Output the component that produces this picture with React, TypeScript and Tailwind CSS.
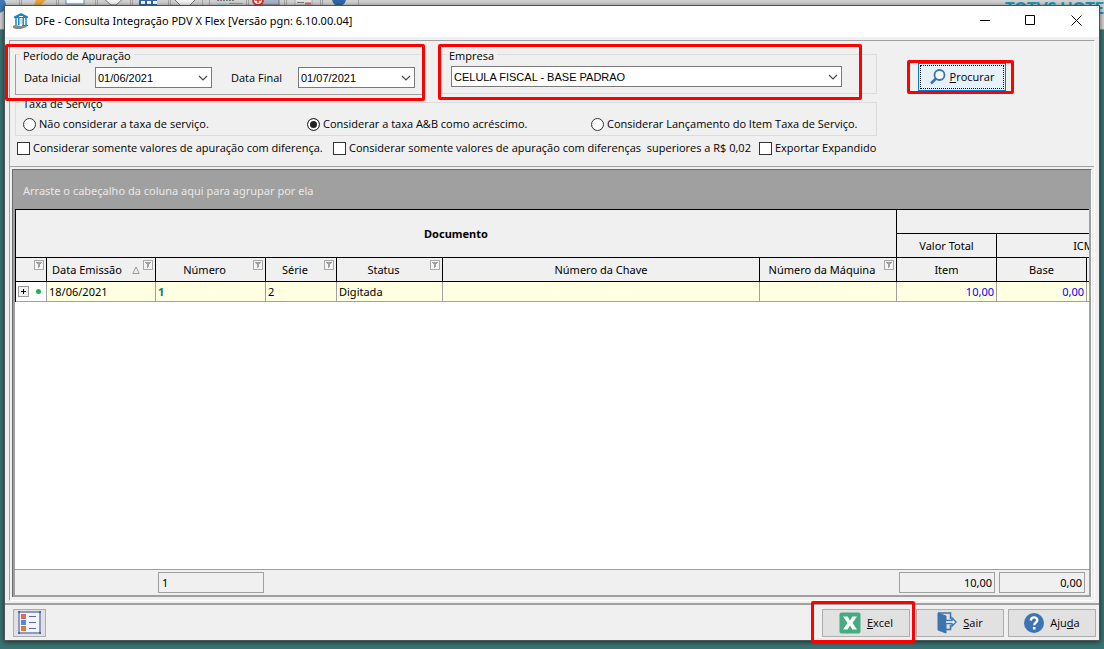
import React from "react";

const label = "text-[11px] leading-4 font-['Open_Sans','Noto_Sans',sans-serif] text-black";
const th = "border-r border-b border-black font-normal p-0 relative";
const td = "border-r border-b border-[#a0a0a0] bg-[#ffffe1] px-0.5 py-0 h-5 whitespace-nowrap";

function Marker({ className }: { className: string }) {
  return <span aria-hidden="true" className={`pointer-events-none absolute z-10 rounded-xs border-3 border-[#ff0000] ${className}`} />;
}

function Chevron() {
  return (
    <svg aria-hidden="true" className="pointer-events-none absolute right-1 top-1/2 -mt-1 h-2 w-2.5" viewBox="0 0 10 8" fill="none" stroke="#444" strokeWidth="1.1">
      <path d="M1 2l4 4 4-4" />
    </svg>
  );
}

function Combo({ id, value, className }: { id: string; value: string; className: string }) {
  return (
    <span className={`relative block ${className}`}>
      <select id={id} className="block h-[21px] w-full appearance-none rounded-none border border-[#7a7a7a] bg-white pl-0.5 pr-4 font-['Liberation_Sans',sans-serif] text-[11px] leading-4 text-black">
        <option>{value}</option>
      </select>
      <Chevron />
    </span>
  );
}

function Group({ title, className, frame, marker, children }: { title: React.ReactNode; className: string; frame: string; marker?: string; children: React.ReactNode }) {
  return (
    <div className={`relative ${className}`}>
      <span aria-hidden="true" className={`absolute inset-x-0 top-1.5 bottom-0 border ${frame}`} />
      <fieldset className="relative">
        <legend className={`ml-[5px] bg-[#f0f0f0] px-[3px] ${label}`}>{title}</legend>
        {children}
      </fieldset>
      {marker && <Marker className={marker} />}
    </div>
  );
}

function FilterIcon() {
  return (
    <svg aria-hidden="true" className="absolute right-0.5 top-0.5 h-2.5 w-2.5" viewBox="0 0 10 10" fill="none" stroke="#a8a8a8">
      <rect x=".5" y=".5" width="9" height="9" fill="#f4f4f4" />
      <path d="M2 2.500h6M3 3.500h4M4.500 4v4M5.500 4v3" stroke="#a0a0a0" />
    </svg>
  );
}

function Radio({ text, checked }: { text: string; checked?: boolean }) {
  return (
    <label className={`flex flex-none items-center gap-[3px] whitespace-nowrap ${label}`}>
      <input type="radio" name="taxa" defaultChecked={checked} className="size-[13px] appearance-none rounded-full border border-[#333] bg-white checked:bg-[#222] checked:shadow-[inset_0_0_0_2px_#fff]" />
      {text}
    </label>
  );
}

function Check({ text }: { text: string }) {
  return (
    <label className={`flex flex-none items-center gap-[3px] whitespace-pre ${label}`}>
      <input type="checkbox" className="size-[13px] appearance-none border border-[#333] bg-white checked:bg-[#333]" />
      {text}
    </label>
  );
}

function BackdropBar() {
  return (
    <div aria-hidden="true" className="absolute inset-x-0 top-0 flex h-[30px] justify-between border-b border-[#888] bg-[#d2d2d2]">
      <svg width="360" height="29" viewBox="0 0 360 29" fill="none">
        <path d="M19.500 0v6M21.500 0v6M56.500 0v6M58.500 0v6M95.500 0v6M97.500 0v6M130.500 0v6M132.500 0v6M168.500 0v6M170.500 0v6M202.500 0v6M209.500 0v6M246.500 0v6M248.500 0v6M284.500 0v6M286.500 0v6M320.500 0v6M322.500 0v6M358.500 0v6" stroke="#a4a4a4" />
        <circle cx="-2" cy="5" r="8" fill="#3f78b5" />
        <path d="M36 0h10l-5 5h-7z" fill="#e8a33c" />
        <rect x="66" y="-6" width="18" height="10" fill="#fff" stroke="#5f8fc4" />
        <path d="M103 -2h21l-8 7h-5z" fill="#f4f4f4" stroke="#777" />
        <rect x="139" y="-2" width="18" height="8" fill="#3568a6" />
        <path d="M141 2.500h4m2 0h4m2 0h4" stroke="#fff" strokeWidth="3" />
        <path d="M173 -2h24l-8 8h-8z" fill="#f4f4f4" stroke="#777" />
        <path d="M217 .5h18" stroke="#777" strokeDasharray="2 1" />
        <path d="M217 4h10" stroke="#a5d5e0" strokeWidth="2" />
        <path d="M229 3.500h14" stroke="#999" />
        <rect x="262" y="-2" width="17" height="7" fill="#a9b6cd" stroke="#777" />
        <circle cx="258" cy="0" r="5" fill="#fff" stroke="#cf3528" strokeWidth="2" />
        <path d="M258 -3v6M255 0h6" stroke="#cf3528" strokeWidth="1.500" />
        <path d="M295 -2h17v7h-17z" fill="#e4e4e4" stroke="#aaa" />
        <path d="M297 2.500h7" stroke="#777" /><path d="M305 3.500h6" stroke="#d66" strokeWidth="2" />
        <circle cx="339" cy="-1" r="7" fill="#2f67a8" />
      </svg>
      <span className="whitespace-nowrap font-['Lato',sans-serif] text-[16px] leading-4 font-black text-[#1d9bb8]">TOTVS HOTE</span>
    </div>
  );
}

function BottomButton({ icon, children }: { icon: React.ReactNode; children: React.ReactNode }) {
  return (
    <button type="button" className={`flex h-7 w-[88px] items-center justify-center gap-1.5 border border-[#adadad] bg-[#e1e1e1] ${label}`}>
      {icon}
      <span>{children}</span>
    </button>
  );
}

export default function App() {
  return (
    <div className="relative flex min-h-screen flex-col overflow-hidden bg-[#3b7272] pt-[5px] pr-1 pb-2 pl-1">
      <BackdropBar />
      <main className="relative flex min-w-0 flex-1 flex-col border border-[#4a5555] bg-[#f0f0f0] shadow-[0_1px_5px_rgba(0,0,0,.6)]">
        <header className="flex h-[31px] items-center justify-between bg-white pb-0.5 pl-2">
          <div className="flex items-center gap-1.5">
            <svg aria-hidden="true" className="h-4 w-4" viewBox="0 0 16 16">
              <path d="M8 0l7 3.500v1.500H1V3.500z" fill="#1c86c2" />
              <path d="M6 3.500h4" stroke="#fff" />
              <path d="M3 5v7M5.800 5v7M10.200 5v7M13 5v7" stroke="#1c86c2" strokeWidth="1.500" />
              <path d="M8 6v5" stroke="#7cc8ea" />
              <path d="M0 13c3-2 5 0 8 0h5c1 0 1 1 0 1.200L8 16H3l-3-1z" fill="#888" />
              <path d="M9 12.500h6" stroke="#1c86c2" />
            </svg>
            <h1 className="font-['Noto_Sans',sans-serif] text-[11px] leading-4">DFe - Consulta Integração PDV X Flex [Versão pgn: 6.10.00.04]</h1>
          </div>
          <div className="flex">
            <button type="button" aria-label="Minimizar" className="flex h-[29px] w-[46px] items-center justify-center">
              <svg className="h-[11px] w-[11px]" viewBox="0 0 11 11"><path d="M0 5.500h10" stroke="#000" /></svg>
            </button>
            <button type="button" aria-label="Maximizar" className="flex h-[29px] w-[45px] items-center justify-center">
              <svg className="h-[11px] w-[11px]" viewBox="0 0 11 11" fill="none"><path d="M.5.5h9v9h-9z" stroke="#000" /></svg>
            </button>
            <button type="button" aria-label="Fechar" className="flex h-[29px] w-[46px] items-center justify-center">
              <svg className="h-[11px] w-[11px]" viewBox="0 0 11 11"><path d="M.5.5l10 10M10.500.5l-10 10" stroke="#000" /></svg>
            </button>
          </div>
        </header>

        <div className="mx-1 mt-[3px] mb-0.5 flex flex-1 flex-col border border-t-[#a0a0a0] border-l-[#a0a0a0] border-r-white border-b-white">
          <section className="flex gap-[41px] border-b border-[#a0a0a0] pt-[7px] pb-2.5 pl-[5px]">
            <div className="w-[862px] flex-none">
              <div className="flex">
                <Group
                  title="Período de Apuração"
                  className="h-[47px] w-[408px] flex-none"
                  frame="border-[#a0a0a0] border-t-[#dcdcdc]"
                  marker="-left-2.5 -right-0.5 -top-1 -bottom-1.5"
                >
                  <div className="flex items-center pl-[9px] pt-[3px]">
                    <label htmlFor="ini" className={`w-[71px] ${label}`}>Data Inicial</label>
                    <Combo id="ini" value="01/06/2021" className="w-[117px]" />
                    <label htmlFor="fim" className={`ml-[19px] w-[67px] ${label}`}>Data Final</label>
                    <Combo id="fim" value="01/07/2021" className="w-[117px]" />
                  </div>
                </Group>
                <Group
                  title={<label htmlFor="emp">Empresa</label>}
                  className="ml-[18px] h-[46px] flex-1"
                  frame="border-[#dcdcdc]"
                  marker="-left-[3px] right-[15px] -top-1 -bottom-1.5"
                >
                  <div className="pl-2.5 pt-0.5">
                    <Combo id="emp" value="CELULA FISCAL - BASE PADRAO" className="w-[391px]" />
                  </div>
                </Group>
              </div>
              <Group title="Taxa de Serviço" className="mt-px h-10" frame="border-[#dcdcdc]">
                <div className="mt-1 grid grid-cols-[284px_284px_1fr] pl-2">
                  <Radio text="Não considerar a taxa de serviço." />
                  <Radio text="Considerar a taxa A&B como acréscimo." checked />
                  <Radio text="Considerar Lançamento do Item Taxa de Serviço." />
                </div>
              </Group>
              <div className="mt-1 grid grid-cols-[316px_426px_1fr] pl-0.5">
                <Check text="Considerar somente valores de apuração com diferença." />
                <Check text="Considerar somente valores de apuração com diferenças  superiores a R$ 0,02" />
                <Check text="Exportar Expandido" />
              </div>
            </div>
            <div className="relative mt-[15px] h-7 w-[88px] flex-none">
              <button type="button" className={`flex h-full w-full items-center justify-center gap-1 border border-[#0078d7] bg-[#e5f1fb] outline-1 -outline-offset-3 outline-dotted outline-black ${label}`}>
                <svg aria-hidden="true" className="h-4 w-4" viewBox="0 0 16 16" fill="none" stroke="#3c74ad">
                  <circle cx="9.500" cy="6" r="5" strokeWidth="1.800" fill="#f4faff" />
                  <path d="M6 9.500l-5 5" strokeWidth="2.600" />
                </svg>
                <span><u>P</u>rocurar</span>
              </button>
              <Marker className="-left-[11px] -right-2 -top-[3px] -bottom-[3px]" />
            </div>
          </section>

          <section className="mx-0.5 mt-0.5 mb-[3px] flex min-h-0 flex-1 flex-col border-t border-l border-[#696969] border-r border-r-white">
            <div className="flex flex-1 flex-col border-2 border-[#a0a0a0] bg-white">
              <p className="flex h-[37px] items-center bg-[#a0a0a0] pl-2 font-['Noto_Sans',sans-serif] text-[11px] leading-4 text-[#e8e8e8]">Arraste o cabeçalho da coluna aqui para agrupar por ela</p>
              <div className="overflow-hidden">
                <table className="w-[calc(100%+88px)] table-fixed border-separate border-spacing-0 border-t border-l border-black font-['Noto_Sans',sans-serif] text-[11px] leading-4">
                  <colgroup>
                    <col className="w-[31px]" /><col className="w-[109px]" /><col className="w-[110px]" /><col className="w-[71px]" /><col className="w-[106px]" /><col /><col className="w-[137px]" /><col className="w-[100px]" /><col className="w-[90px]" /><col className="w-[90px]" />
                  </colgroup>
                  <thead className="bg-[#f0f0f0]">
                    <tr className="h-6">
                      <th colSpan={7} rowSpan={2} className="border-r border-b border-black p-0 font-bold">Documento</th>
                      <th colSpan={3} className={th} />
                    </tr>
                    <tr className="h-6">
                      <th className={th}>Valor Total</th>
                      <th colSpan={2} className={th}>ICMS</th>
                    </tr>
                    <tr className="h-6">
                      <th className={th}><FilterIcon /></th>
                      <th className={`${th} pl-[5px] text-left`}>
                        Data Emissão
                        <svg aria-hidden="true" className="absolute right-[15px] top-2 h-2 w-2" viewBox="0 0 8 8" fill="none" stroke="#999"><path d="M4 1L.8 7.500h6.400z" /></svg>
                        <FilterIcon />
                      </th>
                      <th className={`${th} pr-3`}>Número<FilterIcon /></th>
                      <th className={`${th} pr-3`}>Série<FilterIcon /></th>
                      <th className={`${th} pr-3`}>Status<FilterIcon /></th>
                      <th className={th}>Número da Chave</th>
                      <th className={`${th} pr-3`}>Número da Máquina<FilterIcon /></th>
                      <th className={th}>Item</th>
                      <th className={th}>Base</th>
                      <th className={th} />
                    </tr>
                  </thead>
                  <tbody>
                    <tr>
                      <td className="h-5 border-r border-b border-[#a0a0a0] p-0">
                        <div className="flex items-center gap-[7px] pl-0.5">
                          <button type="button" aria-label="Expandir" className="flex size-[11px] items-center justify-center border border-[#999] bg-[#f0f0f0]">
                            <svg className="size-[5px]" viewBox="0 0 5 5" stroke="#000"><path d="M0 2.500h5M2.500 0v5" /></svg>
                          </button>
                          <span className="size-[5px] rounded-full bg-[#22b14c]" />
                        </div>
                      </td>
                      <td className={td}>18/06/2021</td>
                      <td className={`${td} font-bold text-[#008080]`}>1</td>
                      <td className={td}>2</td>
                      <td className={td}>Digitada</td>
                      <td className={td} />
                      <td className={td} />
                      <td className={`${td} text-right text-[#0000ff]`}>10,00</td>
                      <td className={`${td} text-right text-[#0000ff]`}>0,00</td>
                      <td className={td} />
                    </tr>
                  </tbody>
                </table>
              </div>
              <div className="mt-auto flex h-[26px] items-center border-t border-[#a0a0a0] bg-[#f0f0f0] font-['Noto_Sans',sans-serif] text-[11px] leading-4">
                <output className="ml-[143px] h-[21px] w-[106px] border border-[#a0a0a0] px-[3px] py-0.5">1</output>
                <output className="ml-auto h-[21px] w-24 border border-[#a0a0a0] px-0.5 py-0.5 text-right">10,00</output>
                <output className="ml-1 mr-1 h-[21px] w-[86px] border border-[#a0a0a0] px-0.5 py-0.5 text-right">0,00</output>
              </div>
            </div>
          </section>
        </div>

        <footer className="flex h-[37px] items-center justify-between border-t-2 border-[#a0a0a0] pr-[3px] pl-2">
          <button type="button" aria-label="Opções" className="flex h-7 w-[33px] items-center justify-center border border-[#adadad] bg-[#e1e1e1]">
            <svg className="h-[23px] w-[23px]" viewBox="0 0 23 23">
              <rect x="1" y="1" width="21" height="21" fill="#f4f6ff" stroke="#8d9ac8" strokeWidth="2" />
              <path d="M0 0h2v2H0zM21 0h2v2h-2zM0 21h2v2H0zM21 21h2v2h-2z" fill="#56639c" />
              <path d="M3 3h5v5H3z" fill="#dc6a5e" /><path d="M3 9h5v5H3z" fill="#4a90dc" /><path d="M3 15h5v5H3z" fill="#da7d24" />
              <path d="M11 5.500h7M11 11.500h7M11 17.500h7" stroke="#5967a8" />
            </svg>
          </button>
          <div className="flex gap-1">
            <div className="relative mr-0.5">
              <BottomButton icon={
                <svg aria-hidden="true" className="h-[22px] w-[22px]" viewBox="0 0 22 22">
                  <rect x=".5" y=".5" width="21" height="21" rx="2" fill="#45ab80" />
                  <path d="M4 4.500h4.600L11 8.500l2.400-4H18L13.500 11l4.500 6.500h-4.600L11 13.500l-2.400 4H4L8.500 11z" fill="#fff" />
                </svg>
              }><u>E</u>xcel</BottomButton>
              <Marker className="-left-[11px] -right-[5px] -top-2 -bottom-1.5" />
            </div>
            <BottomButton icon={
              <svg aria-hidden="true" className="h-[22px] w-5" viewBox="0 0 20 22" fill="none" stroke="#3c74ad">
                <path d="M1 1l8 3v17l-8-3z" fill="#3c74ad" />
                <path d="M1 1h12.500v6M9 17.500h4.500V13" strokeWidth="1.500" />
                <path d="M9 8.500h6V6l4 4-4 4v-2.500H9" fill="#fff" strokeWidth="1.400" />
              </svg>
            }><u>S</u>air</BottomButton>
            <BottomButton icon={
              <svg aria-hidden="true" className="h-5 w-5" viewBox="0 0 20 20" fill="none">
                <circle cx="10" cy="10" r="10" fill="#3c74b3" />
                <path d="M6.800 7.600C6.900 3.300 13.400 3.400 13.300 7.300 13.200 9.800 10.200 9.600 10.200 12.300" stroke="#fff" strokeWidth="2.400" />
                <path d="M8.900 14h2.600v2.500H8.900z" fill="#fff" />
              </svg>
            }>Aju<u>d</u>a</BottomButton>
          </div>
        </footer>
      </main>
    </div>
  );
}
